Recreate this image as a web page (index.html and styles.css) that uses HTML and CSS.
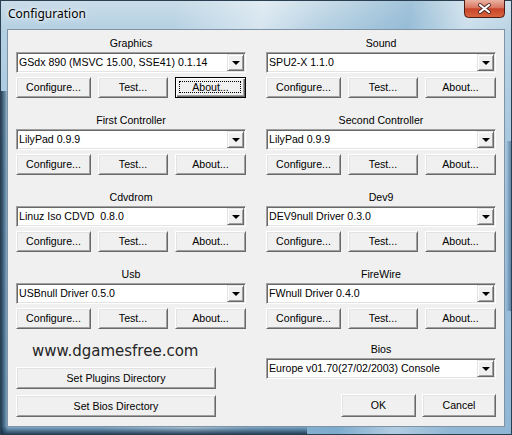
FILE: index.html
```html
<!DOCTYPE html>
<html>
<head>
<meta charset="utf-8">
<link rel="stylesheet" href="styles.css">
</head>
<body>
<div class="window">
  <div class="titlebar">
    <span class="title">Configuration</span>
    <div class="close">
      <svg width="41" height="18" viewBox="0 0 41 18">
        <defs>
          <linearGradient id="cg" x1="0" y1="0" x2="0" y2="1">
            <stop offset="0" stop-color="#eab3a3"/>
            <stop offset="0.45" stop-color="#d9755f"/>
            <stop offset="0.5" stop-color="#c9442b"/>
            <stop offset="1" stop-color="#d8673f"/>
          </linearGradient>
        </defs>
        <path d="M0.5 0 V13.5 Q0.5 17.5 4.5 17.5 H36.5 Q40.5 17.5 40.5 13.5 V0" fill="url(#cg)" stroke="#4a1c14" stroke-width="1"/>
        <path d="M16 5 L25 12 M25 5 L16 12" stroke="#4b2a24" stroke-width="4" stroke-linecap="round"/>
        <path d="M16 5 L25 12 M25 5 L16 12" stroke="#ffffff" stroke-width="2.2" stroke-linecap="round"/>
      </svg>
    </div>
  </div>
  <div class="client">
    <div class="plugins">
      <div class="plugin">
        <div class="label">Graphics</div>
        <div class="combo"><span class="value">GSdx 890 (MSVC 15.00, SSE41) 0.1.14</span><span class="drop"><i class="arrow"></i></span></div>
        <div class="btnrow"><div class="btn">Configure...</div><div class="btn">Test...</div><div class="btn default">About...</div></div>
      </div>
      <div class="plugin">
        <div class="label">Sound</div>
        <div class="combo"><span class="value">SPU2-X 1.1.0</span><span class="drop"><i class="arrow"></i></span></div>
        <div class="btnrow"><div class="btn">Configure...</div><div class="btn">Test...</div><div class="btn">About...</div></div>
      </div>
      <div class="plugin">
        <div class="label">First Controller</div>
        <div class="combo"><span class="value">LilyPad 0.9.9</span><span class="drop"><i class="arrow"></i></span></div>
        <div class="btnrow"><div class="btn">Configure...</div><div class="btn">Test...</div><div class="btn">About...</div></div>
      </div>
      <div class="plugin">
        <div class="label">Second Controller</div>
        <div class="combo"><span class="value">LilyPad 0.9.9</span><span class="drop"><i class="arrow"></i></span></div>
        <div class="btnrow"><div class="btn">Configure...</div><div class="btn">Test...</div><div class="btn">About...</div></div>
      </div>
      <div class="plugin">
        <div class="label">Cdvdrom</div>
        <div class="combo"><span class="value">Linuz Iso CDVD&nbsp; 0.8.0</span><span class="drop"><i class="arrow"></i></span></div>
        <div class="btnrow"><div class="btn">Configure...</div><div class="btn">Test...</div><div class="btn">About...</div></div>
      </div>
      <div class="plugin">
        <div class="label">Dev9</div>
        <div class="combo"><span class="value">DEV9null Driver 0.3.0</span><span class="drop"><i class="arrow"></i></span></div>
        <div class="btnrow"><div class="btn">Configure...</div><div class="btn">Test...</div><div class="btn">About...</div></div>
      </div>
      <div class="plugin">
        <div class="label">Usb</div>
        <div class="combo"><span class="value">USBnull Driver 0.5.0</span><span class="drop"><i class="arrow"></i></span></div>
        <div class="btnrow"><div class="btn">Configure...</div><div class="btn">Test...</div><div class="btn">About...</div></div>
      </div>
      <div class="plugin">
        <div class="label">FireWire</div>
        <div class="combo"><span class="value">FWnull Driver 0.4.0</span><span class="drop"><i class="arrow"></i></span></div>
        <div class="btnrow"><div class="btn">Configure...</div><div class="btn">Test...</div><div class="btn">About...</div></div>
      </div>
    </div>
    <div class="bottom">
      <div class="leftcol">
        <div class="site">www.dgamesfree.com</div>
        <div class="btn wide">Set Plugins Directory</div>
        <div class="btn wide">Set Bios Directory</div>
      </div>
      <div class="rightcol">
        <div class="label">Bios</div>
        <div class="combo"><span class="value">Europe v01.70(27/02/2003) Console</span><span class="drop"><i class="arrow"></i></span></div>
        <div class="okrow"><div class="btn ok">OK</div><div class="btn cancel">Cancel</div></div>
      </div>
    </div>
  </div>
</div>
</body>
</html>
```

FILE: styles.css
```css
* { box-sizing: border-box; }
html, body { margin: 0; padding: 0; }
body { width: 512px; height: 435px; overflow: hidden; background: #fff; }

.window {
  width: 512px;
  height: 435px;
  position: relative;
  border: 1px solid #2b3f52;
  background:
    linear-gradient(to right, rgba(18,40,62,0.85) 0px, rgba(30,70,100,0.5) 4px, rgba(0,0,0,0) 7px) 0 90px / 100% 100% no-repeat,
    linear-gradient(to left, rgba(30,70,110,0.5) 0px, rgba(0,0,0,0) 5px) 0 140px / 100% 170px no-repeat,
    linear-gradient(to top, rgba(20,45,70,0.85) 0px, rgba(40,80,110,0.4) 5px, rgba(0,0,0,0) 8px) 0 0 / 60% 100% no-repeat,
    linear-gradient(100deg, rgba(255,255,255,0) 30%, rgba(255,255,255,0.45) 45%, rgba(255,255,255,0) 55%, rgba(90,150,190,0.35) 70%, rgba(255,255,255,0.3) 80%, rgba(0,0,0,0) 90%),
    linear-gradient(to bottom, #c9dce8 0px, #b4d0e3 30px, #9fc2dc 220px, #8fb6d4 435px);
}

.titlebar {
  height: 28px;
  display: flex;
  align-items: flex-start;
  justify-content: space-between;
}

.title {
  font-family: "Noto Sans", "Open Sans", sans-serif;
  font-size: 12px;
  color: #000;
  margin: 5px 0 0 7px;
  line-height: 16px;
  text-shadow: 0 0 6px rgba(255,255,255,0.95), 0 0 3px rgba(255,255,255,0.9);
}

.close {
  width: 41px;
  height: 18px;
  margin: -1px 6px 0 0;
}
.close svg { display: block; }

.client {
  margin-left: 6px;
  width: 498px;
  height: 398px;
  border: 1px solid #7f93a5;
  background: #f0f0f0;
  padding: 5px 8px 0 8px;
  font-family: "Liberation Sans", Arial, sans-serif;
  font-size: 10.6px;
  color: #000;
}

.plugins {
  display: grid;
  grid-template-columns: 230px 230px;
  column-gap: 20px;
  row-gap: 14px;
}

.plugin { display: flex; flex-direction: column; }

.label {
  height: 16px;
  line-height: 16px;
  text-align: center;
  margin-bottom: 1px;
}

.combo {
  height: 21px;
  background: #fff;
  border: 1px solid;
  border-color: #a0a0a0 #ffffff #ffffff #a0a0a0;
  box-shadow: inset 1px 1px #696969, inset -1px -1px #e3e3e3;
  display: flex;
  align-items: center;
  justify-content: space-between;
  padding: 1px 1px 1px 2px;
}
.combo .value { white-space: nowrap; line-height: 15px; }

.drop {
  width: 17px;
  height: 17px;
  background: #f0f0f0;
  border: 1px solid;
  border-color: #e3e3e3 #696969 #696969 #e3e3e3;
  box-shadow: inset 1px 1px #fff, inset -1px -1px #a0a0a0;
  display: flex;
  align-items: center;
  justify-content: center;
}
.arrow {
  display: block;
  width: 0;
  height: 0;
  border-left: 4px solid transparent;
  border-right: 4px solid transparent;
  border-top: 4px solid #000;
  margin-top: 1px;
}

.btnrow {
  display: grid;
  grid-template-columns: 75px 70px 71px;
  column-gap: 7px;
  margin-top: 4px;
}

.btn {
  position: relative;
  height: 21px;
  line-height: 19px;
  text-align: center;
  background: #f0f0f0;
  border: 1px solid;
  border-color: #ffffff #696969 #696969 #ffffff;
  box-shadow: inset 1px 1px #e3e3e3, inset -1px -1px #a0a0a0;
  white-space: nowrap;
}
.btn.default {
  border-color: #000;
  box-shadow: inset 1px 1px #fff, inset -1px -1px #696969, inset -2px -2px #a0a0a0;
}
.btn.default::after {
  content: "";
  position: absolute;
  left: 3px; top: 3px; right: 4px; bottom: 4px;
  border: 1px dotted #000;
}

.bottom {
  display: grid;
  grid-template-columns: 230px 230px;
  column-gap: 20px;
}

.leftcol { display: flex; flex-direction: column; margin-top: 12px; }
.site {
  height: 20px;
  line-height: 20px;
  font-family: "DejaVu Sans", Verdana, sans-serif;
  font-size: 15px;
  color: #262626;
  padding-left: 16px;
  margin-bottom: 6px;
}
.btn.wide {
  width: 200px;
  height: 22px;
  line-height: 20px;
  margin-bottom: 6px;
}

.rightcol { display: flex; flex-direction: column; margin-top: 12px; }
.okrow {
  display: flex;
  justify-content: flex-end;
  gap: 6px;
  margin-top: 15px;
}
.btn.ok { width: 75px; height: 23px; line-height: 21px; }
.btn.cancel { width: 74px; height: 23px; line-height: 21px; }
```
